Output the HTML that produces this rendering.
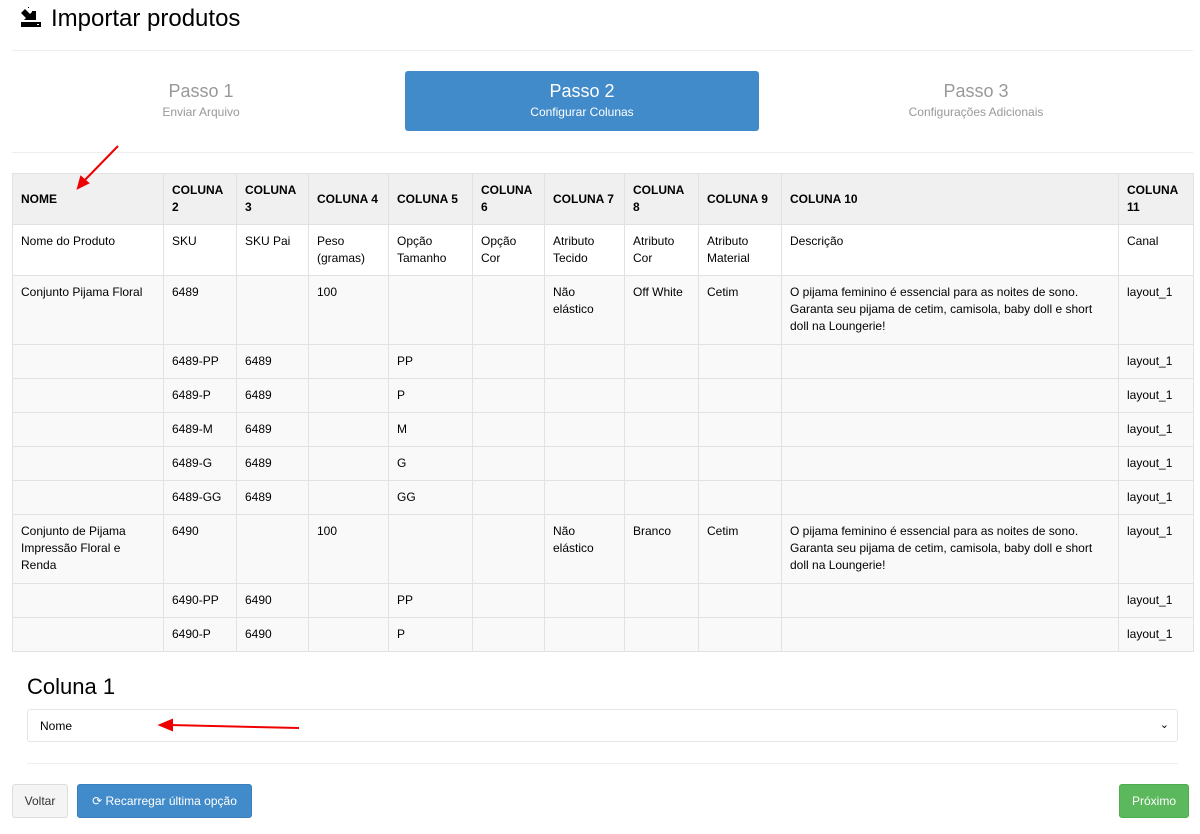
<!DOCTYPE html>
<html><head><meta charset="utf-8"><style>
*{box-sizing:border-box}
body{margin:0;width:1200px;height:834px;background:#fff;font-family:"Liberation Sans",sans-serif;color:#000;position:relative;overflow:hidden}
.abs{position:absolute}
h1{position:absolute;left:20px;top:4px;margin:0;font-size:24px;font-weight:normal;line-height:30px}
.hr{position:absolute;height:1px;background:#eee}
.step{position:absolute;top:71px;width:354px;height:60px;text-align:center;color:#999;border-radius:3px}
.step b{display:block;font-weight:normal;font-size:18px;margin-top:10px;line-height:20px}
.step span{display:block;font-size:12px;margin-top:4px}
.step.act{background:#428bca;color:#fff}
table{position:absolute;left:12px;top:173px;border-collapse:collapse;font-size:12px;table-layout:fixed;width:1181px}
td,th{border:1px solid #e2e2e2;padding:8px 8px;vertical-align:top;line-height:17px;text-align:left}
th{background:#f0f0f0;vertical-align:middle;font-weight:bold;height:51px}
tbody tr{background:#f9f9f9}
tbody tr.s{height:34px}
tbody tr.t{height:69px}
.sel{position:absolute;left:27px;top:709px;width:1151px;height:33px;border:1px solid #e5e5e5;border-radius:3px;font-size:12px;padding:9px 12px}
.btn{position:absolute;top:784px;height:34px;border-radius:3px;font-size:12px;line-height:32px;text-align:center}
</style></head><body>
<h1><svg width="22" height="22" viewBox="0 0 22 22" style="vertical-align:-2px;margin-right:9px"><rect x="1" y="16" width="20" height="5"/><rect x="17" y="18" width="2" height="1" fill="#fff"/><path d="M5 3l5 5 2-2v8H4l2-2-5-5z M8 1h1v1H8z"/><rect x="12" y="5" width="4" height="9"/></svg>Importar produtos</h1>
<div class="hr" style="left:12px;top:50px;width:1181px"></div>
<div class="step" style="left:24px"><b>Passo 1</b><span>Enviar Arquivo</span></div>
<div class="step act" style="left:405px"><b>Passo 2</b><span>Configurar Colunas</span></div>
<div class="step" style="left:799px"><b>Passo 3</b><span>Configurações Adicionais</span></div>
<div class="hr" style="left:12px;top:152px;width:1181px"></div>
<table>
<colgroup><col style="width:151px"><col style="width:73px"><col style="width:72px"><col style="width:80px"><col style="width:84px"><col style="width:72px"><col style="width:80px"><col style="width:74px"><col style="width:83px"><col style="width:337px"><col style="width:75px"></colgroup>
<thead><tr><th>NOME</th><th>COLUNA 2</th><th>COLUNA 3</th><th>COLUNA 4</th><th>COLUNA 5</th><th>COLUNA 6</th><th>COLUNA 7</th><th>COLUNA 8</th><th>COLUNA 9</th><th>COLUNA 10</th><th>COLUNA 11</th></tr></thead>
<tbody>
<tr style="background:#fff"><td>Nome do Produto</td><td>SKU</td><td>SKU Pai</td><td>Peso (gramas)</td><td>Opção Tamanho</td><td>Opção Cor</td><td>Atributo Tecido</td><td>Atributo Cor</td><td>Atributo Material</td><td>Descrição</td><td>Canal</td></tr>
<tr class="t"><td>Conjunto Pijama Floral</td><td>6489</td><td></td><td>100</td><td></td><td></td><td>Não elástico</td><td>Off White</td><td>Cetim</td><td>O pijama feminino é essencial para as noites de sono. Garanta seu pijama de cetim, camisola, baby doll e short doll na Loungerie!</td><td>layout_1</td></tr>
<tr class="s"><td></td><td>6489-PP</td><td>6489</td><td></td><td>PP</td><td></td><td></td><td></td><td></td><td></td><td>layout_1</td></tr>
<tr class="s"><td></td><td>6489-P</td><td>6489</td><td></td><td>P</td><td></td><td></td><td></td><td></td><td></td><td>layout_1</td></tr>
<tr class="s"><td></td><td>6489-M</td><td>6489</td><td></td><td>M</td><td></td><td></td><td></td><td></td><td></td><td>layout_1</td></tr>
<tr class="s"><td></td><td>6489-G</td><td>6489</td><td></td><td>G</td><td></td><td></td><td></td><td></td><td></td><td>layout_1</td></tr>
<tr class="s"><td></td><td>6489-GG</td><td>6489</td><td></td><td>GG</td><td></td><td></td><td></td><td></td><td></td><td>layout_1</td></tr>
<tr class="t"><td>Conjunto de Pijama Impressão Floral e Renda</td><td>6490</td><td></td><td>100</td><td></td><td></td><td>Não elástico</td><td>Branco</td><td>Cetim</td><td>O pijama feminino é essencial para as noites de sono. Garanta seu pijama de cetim, camisola, baby doll e short doll na Loungerie!</td><td>layout_1</td></tr>
<tr class="s"><td></td><td>6490-PP</td><td>6490</td><td></td><td>PP</td><td></td><td></td><td></td><td></td><td></td><td>layout_1</td></tr>
<tr class="s"><td></td><td>6490-P</td><td>6490</td><td></td><td>P</td><td></td><td></td><td></td><td></td><td></td><td>layout_1</td></tr>
</tbody></table>
<div class="abs" style="left:27px;top:674px;font-size:22px">Coluna 1</div>
<div class="sel">Nome<span style="position:absolute;right:8px;top:8px;font-size:11px">&#8964;</span></div>
<div class="hr" style="left:27px;top:763px;width:1151px"></div>
<div class="btn" style="left:12px;width:56px;background:#f4f4f4;border:1px solid #ddd;color:#333">Voltar</div>
<div class="btn" style="left:77px;width:175px;background:#428bca;border:1px solid #3a7fbd;color:#fff">&#10227; Recarregar última opção</div>
<div class="btn" style="left:1119px;width:70px;background:#5cb85c;border:1px solid #4cae4c;color:#fff">Próximo</div>
<svg class="abs" style="left:0;top:0" width="1200" height="834"><g stroke="#e00" stroke-width="2" fill="#e00"><line x1="118" y1="146" x2="82" y2="183"/><path d="M78 188l3-11 7 6z"/><line x1="299" y1="728" x2="170" y2="725"/><path d="M160 725l12-5v10z"/></g></svg>
</body></html>
